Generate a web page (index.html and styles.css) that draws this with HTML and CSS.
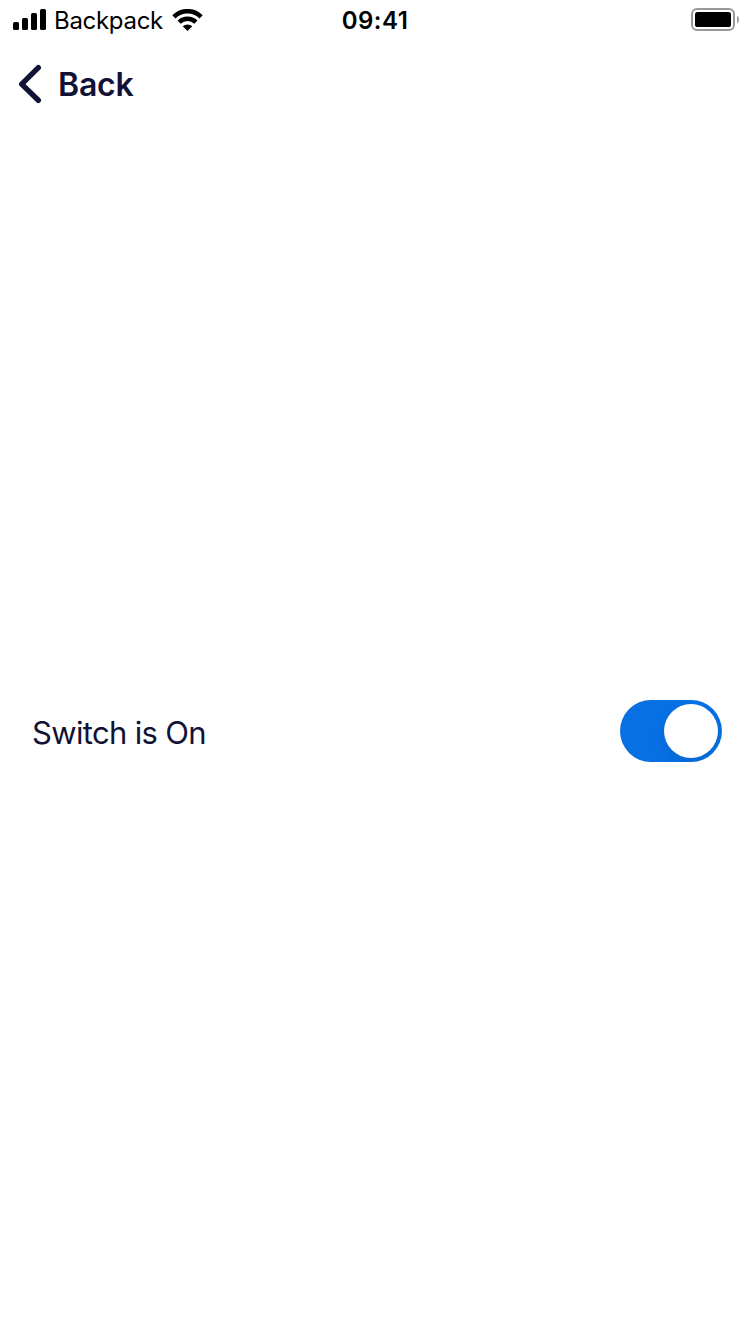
FILE: index.html
```html
<!DOCTYPE html>
<html lang="en">
<head>
<meta charset="utf-8">
<title>Switch</title>
<link rel="stylesheet" href="styles.css">
</head>
<body>
<div class="screen">
  <header class="status-bar">
    <div class="status-left">
      <svg class="signal" width="33" height="21" viewBox="0 0 33 21">
        <rect x="0" y="13" width="6" height="8" rx="1.6"/>
        <rect x="9" y="9" width="6" height="12" rx="1.6"/>
        <rect x="18" y="4" width="6" height="17" rx="1.6"/>
        <rect x="27" y="0" width="6" height="21" rx="1.6"/>
      </svg>
      <span class="carrier">Backpack</span>
      <svg class="wifi" width="31" height="22" viewBox="0 0 31 22">
        <path class="wifi-arc" d="M1.9 7.8A19.4 19.4 0 0 1 29.1 7.8"/>
        <path class="wifi-arc" d="M7.1 13.2A12 12 0 0 1 23.9 13.2"/>
        <path d="M10.7 17.3a7 7 0 0 1 9.6 0L15.5 22Z"/>
      </svg>
    </div>
    <time class="clock">09:41</time>
    <svg class="battery" width="49" height="23" viewBox="0 0 49 23">
      <rect class="battery-shell" x="1" y="1" width="42" height="21" rx="5"/>
      <rect x="4" y="4" width="36" height="15" rx="2.6"/>
      <path class="battery-cap" d="M46 7.5q2 1.4 2 4t-2 4Z"/>
    </svg>
  </header>
  <nav class="nav-bar">
    <a class="back">
      <svg class="chevron" width="24" height="40" viewBox="0 0 24 40">
        <path d="M20.3 3.7 3.7 20.1 20.3 36.3"/>
      </svg>
      <span class="back-label">Back</span>
    </a>
  </nav>
  <main class="content">
    <label class="row">
      <span class="row-label">Switch is On</span>
      <span class="switch"><span class="thumb"></span></span>
    </label>
  </main>
</div>
</body>
</html>
```
FILE: styles.css
```css
body {
  margin: 0;
  background: #fff;
  font-family: Inter, "Liberation Sans", sans-serif;
}

.screen {
  display: flex;
  flex-direction: column;
  width: 750px;
  height: 1334px;
  overflow: hidden;
}

.status-bar {
  display: grid;
  grid-template-columns: 1fr auto 1fr;
  align-items: start;
  height: 40px;
  color: #000;
  line-height: 42px;
}

.status-left {
  display: flex;
  align-items: flex-start;
  padding-left: 13px;
}

.signal {
  margin-top: 9px;
}

.carrier {
  margin-left: 8px;
  width: 118px;
  font-size: 24px;
  letter-spacing: -0.3px;
}

.wifi {
  margin-top: 9px;
}

.wifi-arc {
  fill: none;
  stroke: #000;
  stroke-width: 4.6;
}

.clock {
  font-size: 24px;
  font-weight: 600;
  letter-spacing: 0.5px;
}

.battery {
  justify-self: end;
  margin: 8px 10px 0 0;
}

.battery-shell {
  fill: none;
  stroke: #999;
  stroke-width: 2;
}

.battery-cap {
  fill: #999;
}

.nav-bar {
  display: flex;
  align-items: center;
  height: 88px;
  padding-left: 18px;
  color: #111236;
}

.back {
  display: flex;
  align-items: center;
}

.chevron {
  fill: none;
  stroke: #111236;
  stroke-width: 5.4;
  stroke-linecap: round;
  stroke-linejoin: round;
}

.back-label {
  margin-left: 16px;
  padding-top: 2px;
  font-size: 32px;
  font-weight: 600;
  line-height: 40px;
  letter-spacing: -0.2px;
}

.content {
  display: flex;
  flex: 1;
  align-items: center;
}

.row {
  display: flex;
  flex: 1;
  align-items: center;
  justify-content: space-between;
  padding: 0 28px 0 32px;
}

.row-label {
  color: #111236;
  font-size: 31px;
  line-height: 40px;
  letter-spacing: -0.67px;
  padding-top: 4px;
}

.switch {
  display: flex;
  justify-content: flex-end;
  box-sizing: border-box;
  width: 102px;
  height: 62px;
  padding: 4px;
  overflow: hidden;
  border-radius: 31px;
  background: #0770e3;
}

.thumb {
  width: 54px;
  height: 54px;
  border-radius: 50%;
  background: #fff;
  box-shadow: 0 6px 14px rgba(0, 0, 0, 0.08);
}
```
